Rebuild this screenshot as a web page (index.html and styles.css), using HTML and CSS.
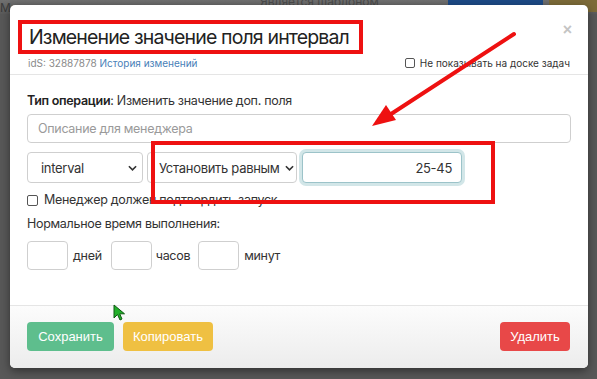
FILE: index.html
```
<!DOCTYPE html>
<html lang="ru">
<head>
<meta charset="utf-8">
<link rel="stylesheet" href="styles.css">
</head>
<body>
<div class="page">
  <div class="page-strip">
    <span class="page-me">Ме</span>
    <span class="page-chk">Является шаблоном</span>
    <span class="page-blue"></span>
    <span class="page-yellow"></span>
  </div>
</div>

<div class="modal">
  <div class="modal-header">
    <span class="close">×</span>
    <h1 class="title">Изменение значение поля интервал</h1>
    <div class="meta">
      <span class="ids">idS: 32887878 <a class="hist">История изменений</a></span>
      <label class="chk"><span class="box"></span>Не показывать на доске задач</label>
    </div>
  </div>
  <div class="modal-body">
    <div class="optype"><b>Тип операции</b>: Изменить значение доп. поля</div>
    <div class="field desc">Описание для менеджера</div>
    <div class="row">
      <div class="field sel sel1">interval<svg class="chev" viewBox="0 0 10 6" width="9" height="6"><path d="M1 1l4 4 4-4" fill="none" stroke="#333" stroke-width="1.8"/></svg></div>
      <div class="field sel sel2">Установить равным<svg class="chev" viewBox="0 0 10 6" width="9" height="6"><path d="M1 1l4 4 4-4" fill="none" stroke="#333" stroke-width="1.8"/></svg></div>
      <div class="field val">25-45</div>
    </div>
    <label class="chk chk2"><span class="box"></span>Менеджер должен подтвердить запуск</label>
    <div class="normal">Нормальное время выполнения:</div>
    <div class="time">
      <div class="field small"></div><span class="unit u1">дней</span>
      <div class="field small"></div><span class="unit u2">часов</span>
      <div class="field small"></div><span class="unit u3">минут</span>
    </div>
  </div>
  <div class="modal-footer">
    <button class="btn save">Сохранить</button>
    <button class="btn copy">Копировать</button>
    <span class="spacer"></span>
    <button class="btn del">Удалить</button>
  </div>
</div>

<div class="redbox"></div>
<svg class="arrow" width="597" height="379" viewBox="0 0 597 379">
  <line x1="514" y1="34" x2="388" y2="116" stroke="#ee1111" stroke-width="4" stroke-linecap="round"/>
  <polygon points="372,126 386,105 396,120" fill="#ee1111"/>
</svg>
<svg class="cursor" width="14" height="18" viewBox="0 0 14 18">
  <path d="M1 1 L1 14 L4.5 10.5 L7 16 L9 15 L6.7 9.8 L11.5 9.8 Z" fill="#22b02a" stroke="#0d5a12" stroke-width="1"/>
</svg>
</body>
</html>
```

FILE: styles.css
```
* { box-sizing: border-box; }
html, body { margin: 0; padding: 0; }
body {
  width: 597px;
  height: 379px;
  overflow: hidden;
  background: #585858;
  font-family: Inter, "Noto Sans", sans-serif;
  color: #333;
  position: relative;
}
.page { height: 379px; }
.page-strip {
  height: 14px;
  display: flex;
  align-items: flex-start;
  background: linear-gradient(#707070, #5a5a5a);
  font-size: 12px;
  line-height: 12px;
  color: #2a2a2a;
}
.page-me { width: 30px; padding-top: 2px; opacity: .7; }
.page-chk { margin-left: 230px; margin-top: -4px; width: 150px; opacity: .5; }
.page-blue { margin-left: 38px; width: 95px; height: 6px; background: #1d4a86; }
.page-yellow { margin-left: 6px; flex: 1; height: 12px; background: #7d6b38; }

.modal {
  position: absolute;
  left: 10px;
  top: 5px;
  width: 578px;
  height: 363px;
  background: #fff;
  border-radius: 5px;
  box-shadow: 0 3px 10px rgba(0,0,0,.45);
  display: flex;
  flex-direction: column;
  overflow: hidden;
}
.modal-header {
  position: relative;
  height: 70px;
  padding: 15px 18px 0 8px;
  border-bottom: 1px solid #e5e5e5;
}
.close {
  position: absolute;
  right: 16px;
  top: 16px;
  font-family: "Liberation Sans", sans-serif;
  font-size: 16px;
  color: #c4c4c4;
  font-weight: bold;
}
.title {
  margin: 0;
  width: 345px;
  height: 34px;
  border: 4px solid #ee1111;
  padding-left: 7px;
  font-size: 19.5px;
  letter-spacing: -0.85px;
  font-weight: 400;
  line-height: 26px;
  color: #222;
  white-space: nowrap;
}
.meta {
  margin-top: 2px;
  padding-left: 10px;
  height: 14px;
  display: flex;
  justify-content: space-between;
  align-items: center;
  font-size: 10px;
  line-height: 14px;
}
.ids { color: #8a8a8a; }
.hist { color: #4a7fb8; }
.chk { display: flex; align-items: center; color: #333; }
.box {
  width: 10px; height: 10px;
  border: 1px solid #555;
  border-radius: 2px;
  margin-right: 5px;
  background: #fff;
}
.modal-body {
  flex: 1;
  padding: 18px 17px 0 17px;
  font-size: 12.5px;
  letter-spacing: -0.3px;
  border-bottom: 1px solid #e5e5e5;
}
.optype { line-height: 16px; height: 16px; color: #333; }
.optype b { font-weight: 600; color: #222; }
.field {
  border: 1px solid #cfcfcf;
  border-radius: 4px;
  background: #fff;
  display: flex;
  align-items: center;
}
.desc {
  margin-top: 5px;
  height: 29px;
  padding-left: 10px;
  color: #9a9a9a;
}
.row {
  margin-top: 9px;
  display: flex;
  height: 31px;
}
.sel {
  height: 31px;
  justify-content: space-between;
  color: #333;
  font-size: 13px;
}
.sel1 { width: 116px; padding: 0 5px 0 13px; }
.sel2 { width: 150px; margin-left: 4px; padding: 0 2px 0 11px; }
.chev { flex: none; }
.val {
  margin-left: 5px;
  width: 160px;
  height: 31px;
  justify-content: flex-end;
  padding-right: 9px;
  border-color: #9cc3c9;
  box-shadow: 0 0 0 3px #d2e6e8;
  font-size: 13px;
  color: #333;
}
.chk2 {
  margin-top: 9px;
  height: 16px;
  line-height: 16px;
}
.chk2 .box { width: 11px; height: 11px; margin-right: 6px; }
.normal {
  margin-top: 8px;
  height: 16px;
  line-height: 16px;
  color: #333;
}
.time {
  margin-top: 9px;
  display: flex;
  align-items: center;
  height: 29px;
}
.small { width: 41px; height: 29px; }
.unit { margin-left: 5px; margin-right: 9px; color: #333; }
.u2 { margin-left: 4px; margin-right: 8px; }

.modal-footer {
  height: 62px;
  padding: 16px 18px 0 17px;
  display: flex;
  align-items: flex-start;
  background: linear-gradient(#fcfcfc, #ececec);
}
.btn {
  height: 29px;
  border: none;
  border-radius: 4px;
  color: #fff;
  font-family: "Liberation Sans", Arial, sans-serif;
  font-size: 13px;
  padding: 0;
}
.save { width: 87px; background: #5ebe8d; }
.copy { width: 90px; margin-left: 9px; background: #efc042; }
.spacer { flex: 1; }
.del { width: 70px; background: #e84848; }

.redbox {
  position: absolute;
  left: 151px;
  top: 141px;
  width: 344px;
  height: 63px;
  border: 4px solid #ee1111;
}
.arrow { position: absolute; left: 0; top: 0; }
.cursor { position: absolute; left: 113px; top: 304px; }
```
